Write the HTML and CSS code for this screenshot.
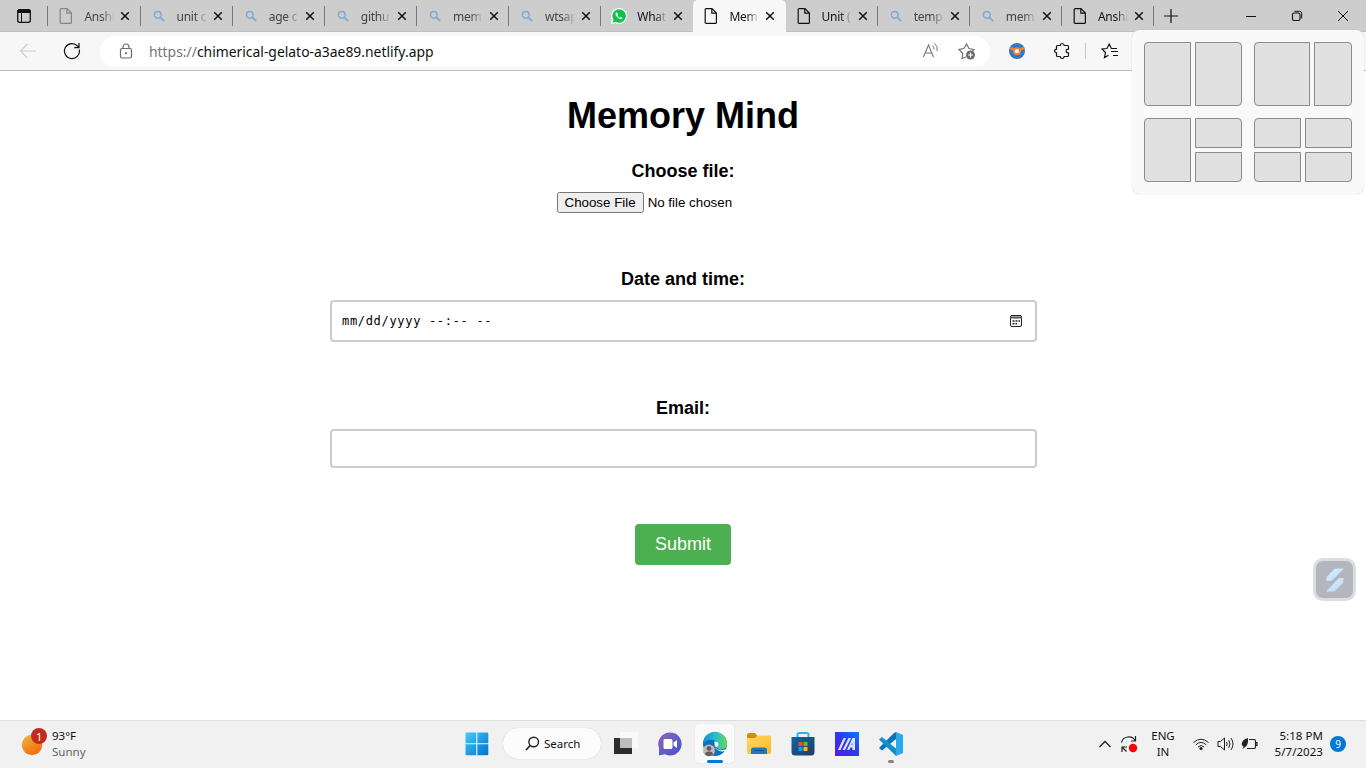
FILE: index.html
```html
<!DOCTYPE html>
<html lang="en">
<head>
<meta charset="utf-8">
<title>Memory Mind</title>
<link rel="stylesheet" href="styles.css">
</head>
<body>
<svg class="defs" width="0" height="0">
  <defs>
    <symbol id="doc" viewBox="0 0 16 16"><path d="M3.200.600h5.800l4.400 4.400v9.400q0 1-1 1H3.200q-1 0-1-1V1.600q0-1 1-1zM8.800.600v4.500h4.500" fill="none" stroke="currentColor" stroke-width="1.200"/></symbol>
    <symbol id="mag" viewBox="0 0 16 16"><circle cx="6.800" cy="6.800" r="3.400" fill="none" stroke="#7fa9d2" stroke-width="1.500"/><path d="M9.200 9.200l4 4" stroke="#7fa9d2" stroke-width="1.800"/></symbol>
    <symbol id="x" viewBox="0 0 10 10"><path d="M1.200 1.200l7.600 7.600M8.800 1.200L1.200 8.800" stroke="#111" stroke-width="1.500"/></symbol>
    <linearGradient id="win" x2="1" y2="1"><stop stop-color="#43cdfb"/><stop offset="1" stop-color="#0070cc"/></linearGradient>
    <linearGradient id="sun" x1=".2" y1="0" x2=".8" y2="1"><stop stop-color="#e9b43c"/><stop offset="1" stop-color="#f5650a"/></linearGradient>
    <linearGradient id="chat" x2="1" y2="1"><stop stop-color="#9b62b5"/><stop offset=".6" stop-color="#5b5cc8"/><stop offset="1" stop-color="#4b50ce"/></linearGradient>
    <linearGradient id="edge" x2="1"><stop stop-color="#168ed5"/><stop offset=".5" stop-color="#26bdd0"/><stop offset="1" stop-color="#68d94d"/></linearGradient>
    <linearGradient id="folder" x2="1" y2="1"><stop stop-color="#ffd866"/><stop offset="1" stop-color="#f9b91d"/></linearGradient>
    <linearGradient id="store" x2="1" y2="1"><stop stop-color="#0b66aa"/><stop offset="1" stop-color="#253b61"/></linearGradient>
    <linearGradient id="asus" x1="0" y1="1" x2="1" y2="0"><stop stop-color="#5a17e8"/><stop offset=".5" stop-color="#2e39ed"/><stop offset="1" stop-color="#0877ff"/></linearGradient>
    <linearGradient id="ice" x2="1" y2="1"><stop stop-color="#e0f0ff"/><stop offset="1" stop-color="#b5d9fa"/></linearGradient>
  </defs>
</svg>
<div class="desktop">
  <header class="tabs">
    <div class="workspaces"><svg width="16" height="16" viewBox="0 0 16 16"><rect x="1.700" y="1.700" width="12.600" height="12.600" rx="2" fill="none" stroke="#111" stroke-width="1.300"/><path d="M2 2h12v2.500H2z" fill="#111" stroke="#111"/><path d="M5.500 5v9" stroke="#111"/></svg></div>
    <div class="tab asleep"><svg class="fav"><use href="#doc"/></svg><span class="name">Anshi</span><svg class="close"><use href="#x"/></svg></div>
    <div class="tab asleep"><svg class="fav"><use href="#mag"/></svg><span class="name">unit c</span><svg class="close"><use href="#x"/></svg></div>
    <div class="tab asleep"><svg class="fav"><use href="#mag"/></svg><span class="name">age c</span><svg class="close"><use href="#x"/></svg></div>
    <div class="tab asleep"><svg class="fav"><use href="#mag"/></svg><span class="name">githu</span><svg class="close"><use href="#x"/></svg></div>
    <div class="tab asleep"><svg class="fav"><use href="#mag"/></svg><span class="name">mem</span><svg class="close"><use href="#x"/></svg></div>
    <div class="tab asleep"><svg class="fav"><use href="#mag"/></svg><span class="name">wtsap</span><svg class="close"><use href="#x"/></svg></div>
    <div class="tab last"><svg class="fav" viewBox="0 0 16 16"><path d="M8 0a8 8 0 1 1-3.600 15.100L0 16l1-4.200A8 8 0 0 1 8 0z" fill="#fff"/><path d="M8 1.200a6.800 6.800 0 1 1-3.400 12.600l-3 .9.900-3A6.800 6.800 0 0 1 8 1.200z" fill="#12c04d"/><path d="M5.700 4.200c-1.900 1-1.200 3.200.7 5.100s4.200 2.700 5.200 1l-1.800-1.500-1.100.9C7.600 9.200 7 8.500 6.500 7.500l.8-.9z" fill="#fff"/></svg><span class="name">What</span><svg class="close"><use href="#x"/></svg></div>
    <div class="tab active"><svg class="fav"><use href="#doc"/></svg><span class="name">Mem</span><svg class="close"><use href="#x"/></svg></div>
    <div class="tab"><svg class="fav"><use href="#doc"/></svg><span class="name">Unit (</span><svg class="close"><use href="#x"/></svg></div>
    <div class="tab asleep"><svg class="fav"><use href="#mag"/></svg><span class="name">temp</span><svg class="close"><use href="#x"/></svg></div>
    <div class="tab asleep"><svg class="fav"><use href="#mag"/></svg><span class="name">mem</span><svg class="close"><use href="#x"/></svg></div>
    <div class="tab"><svg class="fav"><use href="#doc"/></svg><span class="name">Anshi</span><svg class="close"><use href="#x"/></svg></div>
    <svg class="plus" width="14" height="14" viewBox="0 0 14 14"><path d="M7 0v14M0 7h14" stroke="#111" stroke-width="1.200"/></svg>
    <div class="window-buttons">
      <svg width="12" height="12" viewBox="0 0 12 12"><path d="M1 6.500h10" stroke="#111"/></svg>
      <svg width="12" height="12" viewBox="0 0 12 12"><rect x="1.500" y="3" width="7.500" height="7.500" rx="1.500" fill="none" stroke="#111" stroke-width="1.100"/><path d="M3.500 1.300h5q2.200 0 2.200 2.200v5" fill="none" stroke="#111"/></svg>
      <svg width="12" height="12" viewBox="0 0 12 12"><path d="M1 1l10 10M11 1L1 11" stroke="#111"/></svg>
    </div>
  </header>

  <nav class="toolbar">
    <svg class="back" width="18" height="18" viewBox="0 0 18 18"><path d="M17 9H1.500M8.500 2L1.500 9l7 7" fill="none" stroke="#ccc" stroke-width="1.100"/></svg>
    <svg class="reload" width="18" height="18" viewBox="0 0 18 18"><path d="M16.300 7.500A7.500 7.500 0 1 1 14.500 4L16 5.500M16 1v4.600h-4.700" fill="none" stroke="#111" stroke-width="1.200"/></svg>
    <div class="address">
      <svg width="14" height="16" viewBox="0 0 14 16"><rect x="1.500" y="5.500" width="11" height="9.500" rx="1.500" fill="none" stroke="#6b6b6b" stroke-width="1.200"/><path d="M4 5.500V4a3 3 0 0 1 6 0v1.500" fill="none" stroke="#6b6b6b" stroke-width="1.200"/><circle cx="7" cy="10.200" r="1" fill="#555"/></svg>
      <div class="url"><span class="scheme">https://</span><span class="host">chimerical-gelato-a3ae89.netlify.app</span></div>
      <svg class="read" width="18" height="18" viewBox="0 0 18 18"><path d="M1.500 15L6.500 3l5 12M3.200 11h6.600" fill="none" stroke="#777" stroke-width="1.100"/><path d="M10.500 3.500q2 1.500 1.500 4M12.500 1.500q4 3 2.500 7.500" fill="none" stroke="#777"/></svg>
      <svg class="fave" width="18" height="18" viewBox="0 0 18 18"><path d="M8 15l-4 1.500.8-5L1 7.500l5-.9L8.500 2 11 6.600l5 .9-1.500 1.500" fill="none" stroke="#6b6b6b" stroke-width="1.100"/><circle cx="12.500" cy="13" r="4.500" fill="#6b6b6b"/><path d="M12.500 10.500v5M10 13h5" stroke="#fff" stroke-width="1.200"/></svg>
    </div>
    <svg class="ext" width="16" height="16" viewBox="0 0 16 16"><circle cx="8" cy="8" r="8" fill="#3677c4"/><path d="M1 4.200L4 4.500 6 6h4l2-1.500 3-.3.500 1.600-3.500 2-1 2.700H5L4 7.800.5 5.800z" fill="#f57f37"/><circle cx="8" cy="8.200" r="3" fill="#fff" stroke="#f57f37" stroke-width="1.800"/></svg>
    <svg class="puzzle" width="18" height="18" viewBox="0 0 18 18"><path d="M4.500 3.500h2.800Q7.500 1.500 9.200 1.500t2 2h3.300q1 0 1 1v2.700q-2.300-.2-2.300 1.800t2.300 1.800v2.700q0 1-1 1h-3.300q-.2 2-2 2t-2-2H4.500q-1 0-1-1v-2.700Q1.500 10.500 1.500 9t2-1.800V4.500q0-1 1-1z" fill="none" stroke="#111" stroke-width="1.200"/></svg>
    <i class="rule"></i>
    <svg class="favs" width="18" height="18" viewBox="0 0 18 18"><path d="M7.500 13.300L3.500 15.500l1-5L1 7l5-.5L8.200 2l2.200 4.500H16M10 9.500h7M12 13.500h5" fill="none" stroke="#111" stroke-width="1.200"/></svg>
  </nav>

  <main class="page">
    <h1>Memory Mind</h1>
    <form>
      <label for="file">Choose file:</label>
      <input class="file" id="file" type="file">
      <label for="when">Date and time:</label>
      <div class="field when" id="when"><span>mm/dd/yyyy --:-- --</span><svg width="14" height="14" viewBox="0 0 14 14"><rect x="1.500" y="1.500" width="11" height="11" rx="1.500" fill="none" stroke="#222"/><path d="M1 2.500h12v2H1z" fill="#555"/><path d="M3.500 7h2M6.500 7h2M9.500 7h1.500M3.500 9.700h2M6.500 9.700h1.500" stroke="#222" stroke-width="1.400"/></svg></div>
      <label for="email">Email:</label>
      <input class="field email" id="email" type="email">
      <button class="submit" type="button">Submit</button>
    </form>
  </main>

  <footer class="taskbar">
    <div class="weather">
      <svg width="28" height="30" viewBox="0 0 28 30"><circle cx="11" cy="18" r="10.200" fill="url(#sun)"/><circle cx="18" cy="9" r="8" fill="#c42b1c"/></svg><span class="count">1</span>
      <div class="lines"><span>93°F</span><span class="dim">Sunny</span></div>
    </div>
    <div class="apps">
      <svg width="24" height="24" viewBox="0 0 24 24"><path d="M.5 1.500q0-1 1-1h9.700v10.700H.5zM12.300.5h10q1 0 1 1v9.700h-11zM.5 12.300h10.700v11H1.500q-1 0-1-1zM12.300 12.300h11v10q0 1-1 1h-10z" fill="url(#win)"/></svg>
      <div class="search"><svg width="15" height="15" viewBox="0 0 15 15"><circle cx="8.700" cy="6" r="4.800" fill="none" stroke="#222" stroke-width="1.400"/><path d="M5.200 9.500L1 14" stroke="#222" stroke-width="1.700"/></svg><span>Search</span></div>
      <svg width="24" height="24" viewBox="0 0 24 24"><path d="M0 6h18v16H0z" fill="#2c2c2b"/><path d="M6 0h18v16H6z" fill="#f9f9f9"/><path d="M6 6h12v10H6z" fill="#bdbdbd"/></svg>
      <svg width="24" height="24" viewBox="0 0 24 24"><path d="M12 .5A11.500 11.500 0 1 1 7 22.300L1 23.500v-7.300A11.500 11.500 0 0 1 12 .5z" fill="url(#chat)"/><rect x="5.500" y="7" width="9" height="10" rx="1.500" fill="#fff"/><path d="M15.500 10.500l3.500-2.500v8l-3.500-2.500z" fill="#fff"/></svg>
      <div class="current"><svg width="26" height="26" viewBox="0 0 26 26"><circle cx="13" cy="13" r="12" fill="#116fba"/><path d="M1 13A12 12 0 0 1 25 13c0 4-3 5.500-6 5.500s-4.500-1.200-3.500-3c1-2 .5-5.500-4-6.500C7 8 3 10 1 13z" fill="url(#edge)"/><path d="M13 10.500c-2 2.500-.5 7.500 4.500 8.500 3 .6 5.500-.2 7.200-1.500-.3 1-.7 1.800-1.200 2.500-3 1-8 .5-10.500-3.500-1.200-2-1.200-4.500 0-6z" fill="#f5fafc"/><path d="M12.500 10.500c2-.5 4 1 4 2.800 0 1.400-1 2-1.200 3-1.500.2-3.200-1.800-2.800-5.800z" fill="#f5fafc"/><circle cx="7" cy="19.500" r="6" fill="#bdbab8"/><circle cx="7" cy="17.500" r="2.400" fill="#625f5d"/><path d="M3 23.500q0-3 4-3t4 3q-4 3-8 0z" fill="#625f5d"/></svg><i></i></div>
      <svg width="24" height="24" viewBox="0 0 24 24"><path d="M0 3q0-2 2-2h6l2 2.500V8H0z" fill="#d58b10"/><path d="M0 6h8l2.500-2.500H22q2 0 2 2V20q0 2-2 2H2q-2 0-2-2z" fill="url(#folder)"/><path d="M4 22v-4q0-2.500 2.500-2.500h11Q20 15.500 20 18v4z" fill="#1979c7"/><path d="M7 18.500h10" stroke="#0e5294"/></svg>
      <svg width="24" height="24" viewBox="0 0 24 24"><path d="M6.500 7V2.500q0-1.500 1.500-1.500h8q1.500 0 1.500 1.500V7" fill="none" stroke="#24b8ed" stroke-width="2"/><path d="M.5 5h23v15q0 3.500-3.500 3.500H4Q.5 23.500.5 20z" fill="url(#store)"/><path d="M7.500 10h4v4h-4z" fill="#f25022"/><path d="M12.500 10h4v4h-4z" fill="#7fba00"/><path d="M7.500 15h4v4h-4z" fill="#00a4ef"/><path d="M12.500 15h4v4h-4z" fill="#ffb900"/></svg>
      <svg width="24" height="24" viewBox="0 0 24 24"><path d="M0 0h24v24H0z" fill="url(#asus)"/><path d="M3 18L8.500 6H11L5.500 18zM7.500 18L13.500 6H16l-6 12zM12 18l5.500-12H20v12h-2.600v-2.500h-2L14.200 18zM16.300 13h1.100v-2.600z" fill="#dbe4ff"/></svg>
      <div class="running"><svg width="24" height="24" viewBox="0 0 24 24"><path d="M17 0v7L3 18.500 0 16l15-15z" fill="#0875b9"/><path d="M0 7.500L3 5l14 11.500V24z" fill="#168dcd"/><path d="M17 0l7 3v18l-7 3z" fill="#2ca9ed"/></svg><i></i></div>
    </div>
    <div class="tray">
      <svg class="chev" width="14" height="10" viewBox="0 0 14 10"><path d="M1.500 8L7 2.500 12.500 8" fill="none" stroke="#222" stroke-width="1.300"/></svg>
      <svg class="sync" width="18" height="18" viewBox="0 0 18 18"><path d="M1.500 7.500C3 1 12 0 15 5.500M15.500 1v5H11M2 17v-5h5M2.500 12.500l4 4" fill="none" stroke="#222" stroke-width="1.200"/><circle cx="13" cy="13" r="4.200" fill="#f00"/></svg>
      <div class="lang"><span>ENG</span><span>IN</span></div>
      <svg class="wifi" width="16" height="14" viewBox="0 0 16 14"><path d="M.5 5.500Q8-1 15.500 5.500M2.800 7.800Q8 3 13.200 7.800M5 10q3-3 6 0" fill="none" stroke="#222" stroke-width="1"/><circle cx="8" cy="11.500" r="1.600" fill="#222"/></svg>
      <svg class="vol" width="17" height="14" viewBox="0 0 17 14"><path d="M1 4.500h2.500L7.500 1v12L3.500 9.500H1zM9.500 5q1.200 2 0 4M11.700 3q2.500 4 0 8M14 1q4 6 0 12" fill="none" stroke="#222" stroke-width="1"/></svg>
      <svg class="bat" width="17" height="14" viewBox="0 0 17 14"><path d="M8 2.500h5q1.500 0 1.500 1.500v6q0 1.500-1.500 1.500H6M15 5.500h1v3h-1" fill="none" stroke="#222" stroke-width="1.200"/><path d="M7 1Q.5 2.500.8 8l1.700 1.500L1.500 12l2-1.500Q7.500 9 7 1z" fill="#222"/></svg>
      <div class="clock"><span>5:18 PM</span><span>5/7/2023</span></div>
      <span class="notices">9</span>
    </div>
  </footer>

  <div class="snap">
    <div class="layout halves"><i class="tl bl"></i><i class="tr br"></i></div>
    <div class="layout wide"><i class="tl bl"></i><i class="tr br"></i></div>
    <div class="layout halves quads"><i class="tl bl tall"></i><i class="tr"></i><i class="br"></i></div>
    <div class="layout halves quads"><i class="tl"></i><i class="tr"></i><i class="bl"></i><i class="br"></i></div>
  </div>
  <div class="helper"><svg width="20" height="26" viewBox="0 0 20 26"><path d="M1.500 14V11q0-1.500 1-2L9 2.500Q10 1.500 12 1.500h7L7.500 13q-1 1-3 1z" fill="url(#ice)"/><path d="M18.500 11v3q0 1.500-1 2.500L11 23q-1 1.500-3 1.500H1L12.500 12.500q1-1.500 3-1.500z" fill="url(#ice)"/></svg></div>
</div>
</body>
</html>
```
FILE: styles.css
```css
* { box-sizing: border-box; }
body { margin: 0; overflow: hidden; background: #fff; font: 12px "Noto Sans", sans-serif; color: #111; }
svg { display: block; flex: none; }
.defs { position: absolute; }
.desktop { position: relative; width: 1366px; height: 768px; display: flex; flex-direction: column; }

.tabs { height: 32px; flex: none; display: flex; align-items: stretch; background: #cdcdcd; box-shadow: inset 0 -1px #c1c1c1; }
.workspaces { width: 48.4px; display: flex; align-items: center; justify-content: center; position: relative; }
.tab { position: relative; width: 92.15px; flex: none; display: flex; align-items: center; padding-left: 10px; }
.workspaces::after, .tab::after { content: ""; position: absolute; right: 0; top: 6px; width: 1px; height: 20px; background: #777; }
.tab.last::after, .tab.active::after { display: none; }
.active { background: #f7f7f7; border-radius: 5px 5px 0 0; }
.fav { width: 16px; height: 16px; color: #111; }
.asleep .fav { color: #858585; }
.name { width: 32px; margin-left: 10px; white-space: nowrap; letter-spacing: -.25px; -webkit-mask-image: linear-gradient(90deg, #000 55%, transparent 95%); mask-image: linear-gradient(90deg, #000 55%, transparent 95%); }
.asleep .name { color: #444; }
.close { width: 10px; height: 10px; margin-left: 4px; }
.plus { align-self: center; margin-left: 10px; }
.window-buttons { margin-left: auto; padding-right: 17px; display: flex; align-items: center; gap: 34px; }

.toolbar { height: 39px; flex: none; display: flex; align-items: center; background: #f7f7f7; border-bottom: 1px solid #bcbcbc; }
.back { margin-left: 19px; }
.reload { margin-left: 26px; }
.address { width: 890px; height: 31px; margin-left: 19px; padding-left: 19px; border-radius: 16px; background: #fff; display: flex; align-items: center; }
.url { margin-left: 16px; font-size: 13.9px; white-space: nowrap; }
.scheme { color: #767676; }
.read { margin-left: auto; }
.fave { margin: 0 14px 0 18px; }
.ext { margin-left: 19px; }
.puzzle { margin-left: 28px; }
.rule { width: 1px; height: 16px; margin-left: 14px; background: #c8c8c8; }
.favs { margin-left: 15px; }

.page { flex: 1; min-height: 0; padding-top: 24px; font-family: "Liberation Sans", Arial, sans-serif; color: #000; }
h1 { margin: 0; height: 41px; line-height: 41px; font-size: 36px; text-align: center; }
form { width: 706px; margin: 25px auto 0; display: flex; flex-direction: column; align-items: center; }
label { height: 21px; margin-bottom: 10px; font-size: 18px; font-weight: 700; line-height: 21px; }
.file { width: 253px; height: 21px; margin-bottom: 56px; font: 13.333px "Liberation Sans", Arial, sans-serif; }
.field { width: 707px; margin-right: -1px; border: 2px solid #ccc; border-radius: 4px; background: #fff; }
.when { height: 42px; margin-bottom: 56px; padding: 0 12px 0 10px; display: flex; align-items: center; justify-content: space-between; font: 12px "DejaVu Sans Mono", monospace; letter-spacing: .68px; white-space: pre; }
.email { height: 39px; margin-bottom: 56px; }
.submit { width: 96px; height: 41px; padding: 0; border: 0; border-radius: 4px; background: #4caf50; color: #fff; font: 18px "Liberation Sans", Arial, sans-serif; }

.taskbar { height: 48px; flex: none; display: flex; align-items: center; padding-bottom: 2px; background: #f1f1f1; border-top: 1px solid #dedede; }
.weather { width: 465px; padding-left: 21px; display: flex; align-items: center; position: relative; }
.weather svg { margin-top: -4px; }
.count { position: absolute; left: 36px; top: 2px; color: #fff; font-size: 11px; line-height: 14px; }
.lines, .lang, .clock { display: flex; flex-direction: column; line-height: 16px; font-size: 11.5px; }
.lines { margin-left: 3px; }
.dim { color: #626262; }
.apps { display: flex; align-items: center; gap: 20px; }
.search { width: 98px; height: 31px; margin: 0 -7px 0 -6px; padding-left: 22px; border-radius: 16px; background: #fcfcfc; box-shadow: 0 0 1px #bbb; display: flex; align-items: center; gap: 4px; font-size: 11.5px; }
.current, .running { position: relative; display: flex; align-items: center; justify-content: center; }
.current { width: 39px; height: 39px; margin: 0 -7px; background: #fafafa; border-radius: 4px; box-shadow: 0 0 1px #ccc; }
.current i, .running i { position: absolute; height: 3px; border-radius: 2px; }
.current i { width: 16px; bottom: 0; background: #0078d4; }
.running i { width: 6px; bottom: -7px; background: #858585; }
.tray { margin-left: auto; display: flex; align-items: center; padding-right: 20px; }
.sync { margin-left: 8px; }
.lang { width: 30px; margin-left: 10px; text-align: center; }
.wifi { margin-left: 15px; }
.vol { margin-left: 8px; }
.bat { margin-left: 7px; }
.clock { width: 60px; margin-left: 5px; text-align: right; white-space: nowrap; align-items: flex-end; letter-spacing: .05px; }
.notices { width: 16px; height: 16px; margin-left: 7px; border-radius: 50%; background: #0078d4; color: #fff; font-size: 10px; line-height: 16px; text-align: center; }

.snap { position: absolute; left: 1132px; top: 30px; width: 232px; height: 164px; padding: 12px; border-radius: 8px; background: #f9f9f9; box-shadow: 0 0 1px #bbb; display: grid; grid-template-columns: 98px 98px; grid-template-rows: 64px 64px; gap: 12px; }
.layout { display: grid; gap: 4px; }
.halves { grid-template-columns: 47px 47px; }
.wide { grid-template-columns: 56px 38px; }
.quads { grid-template-rows: 30px 30px; }
.tall { grid-row: span 2; }
.layout i { background: #e0e0e0; border: 1px solid #8b8b8b; }
.tl { border-top-left-radius: 4px; }
.tr { border-top-right-radius: 4px; }
.bl { border-bottom-left-radius: 4px; }
.br { border-bottom-right-radius: 4px; }
.helper { position: absolute; left: 1313px; top: 558px; width: 43px; height: 43px; border: 3px solid #dcdde1; border-radius: 10px; background: #b5b6bd; display: flex; align-items: center; justify-content: center; }
```
